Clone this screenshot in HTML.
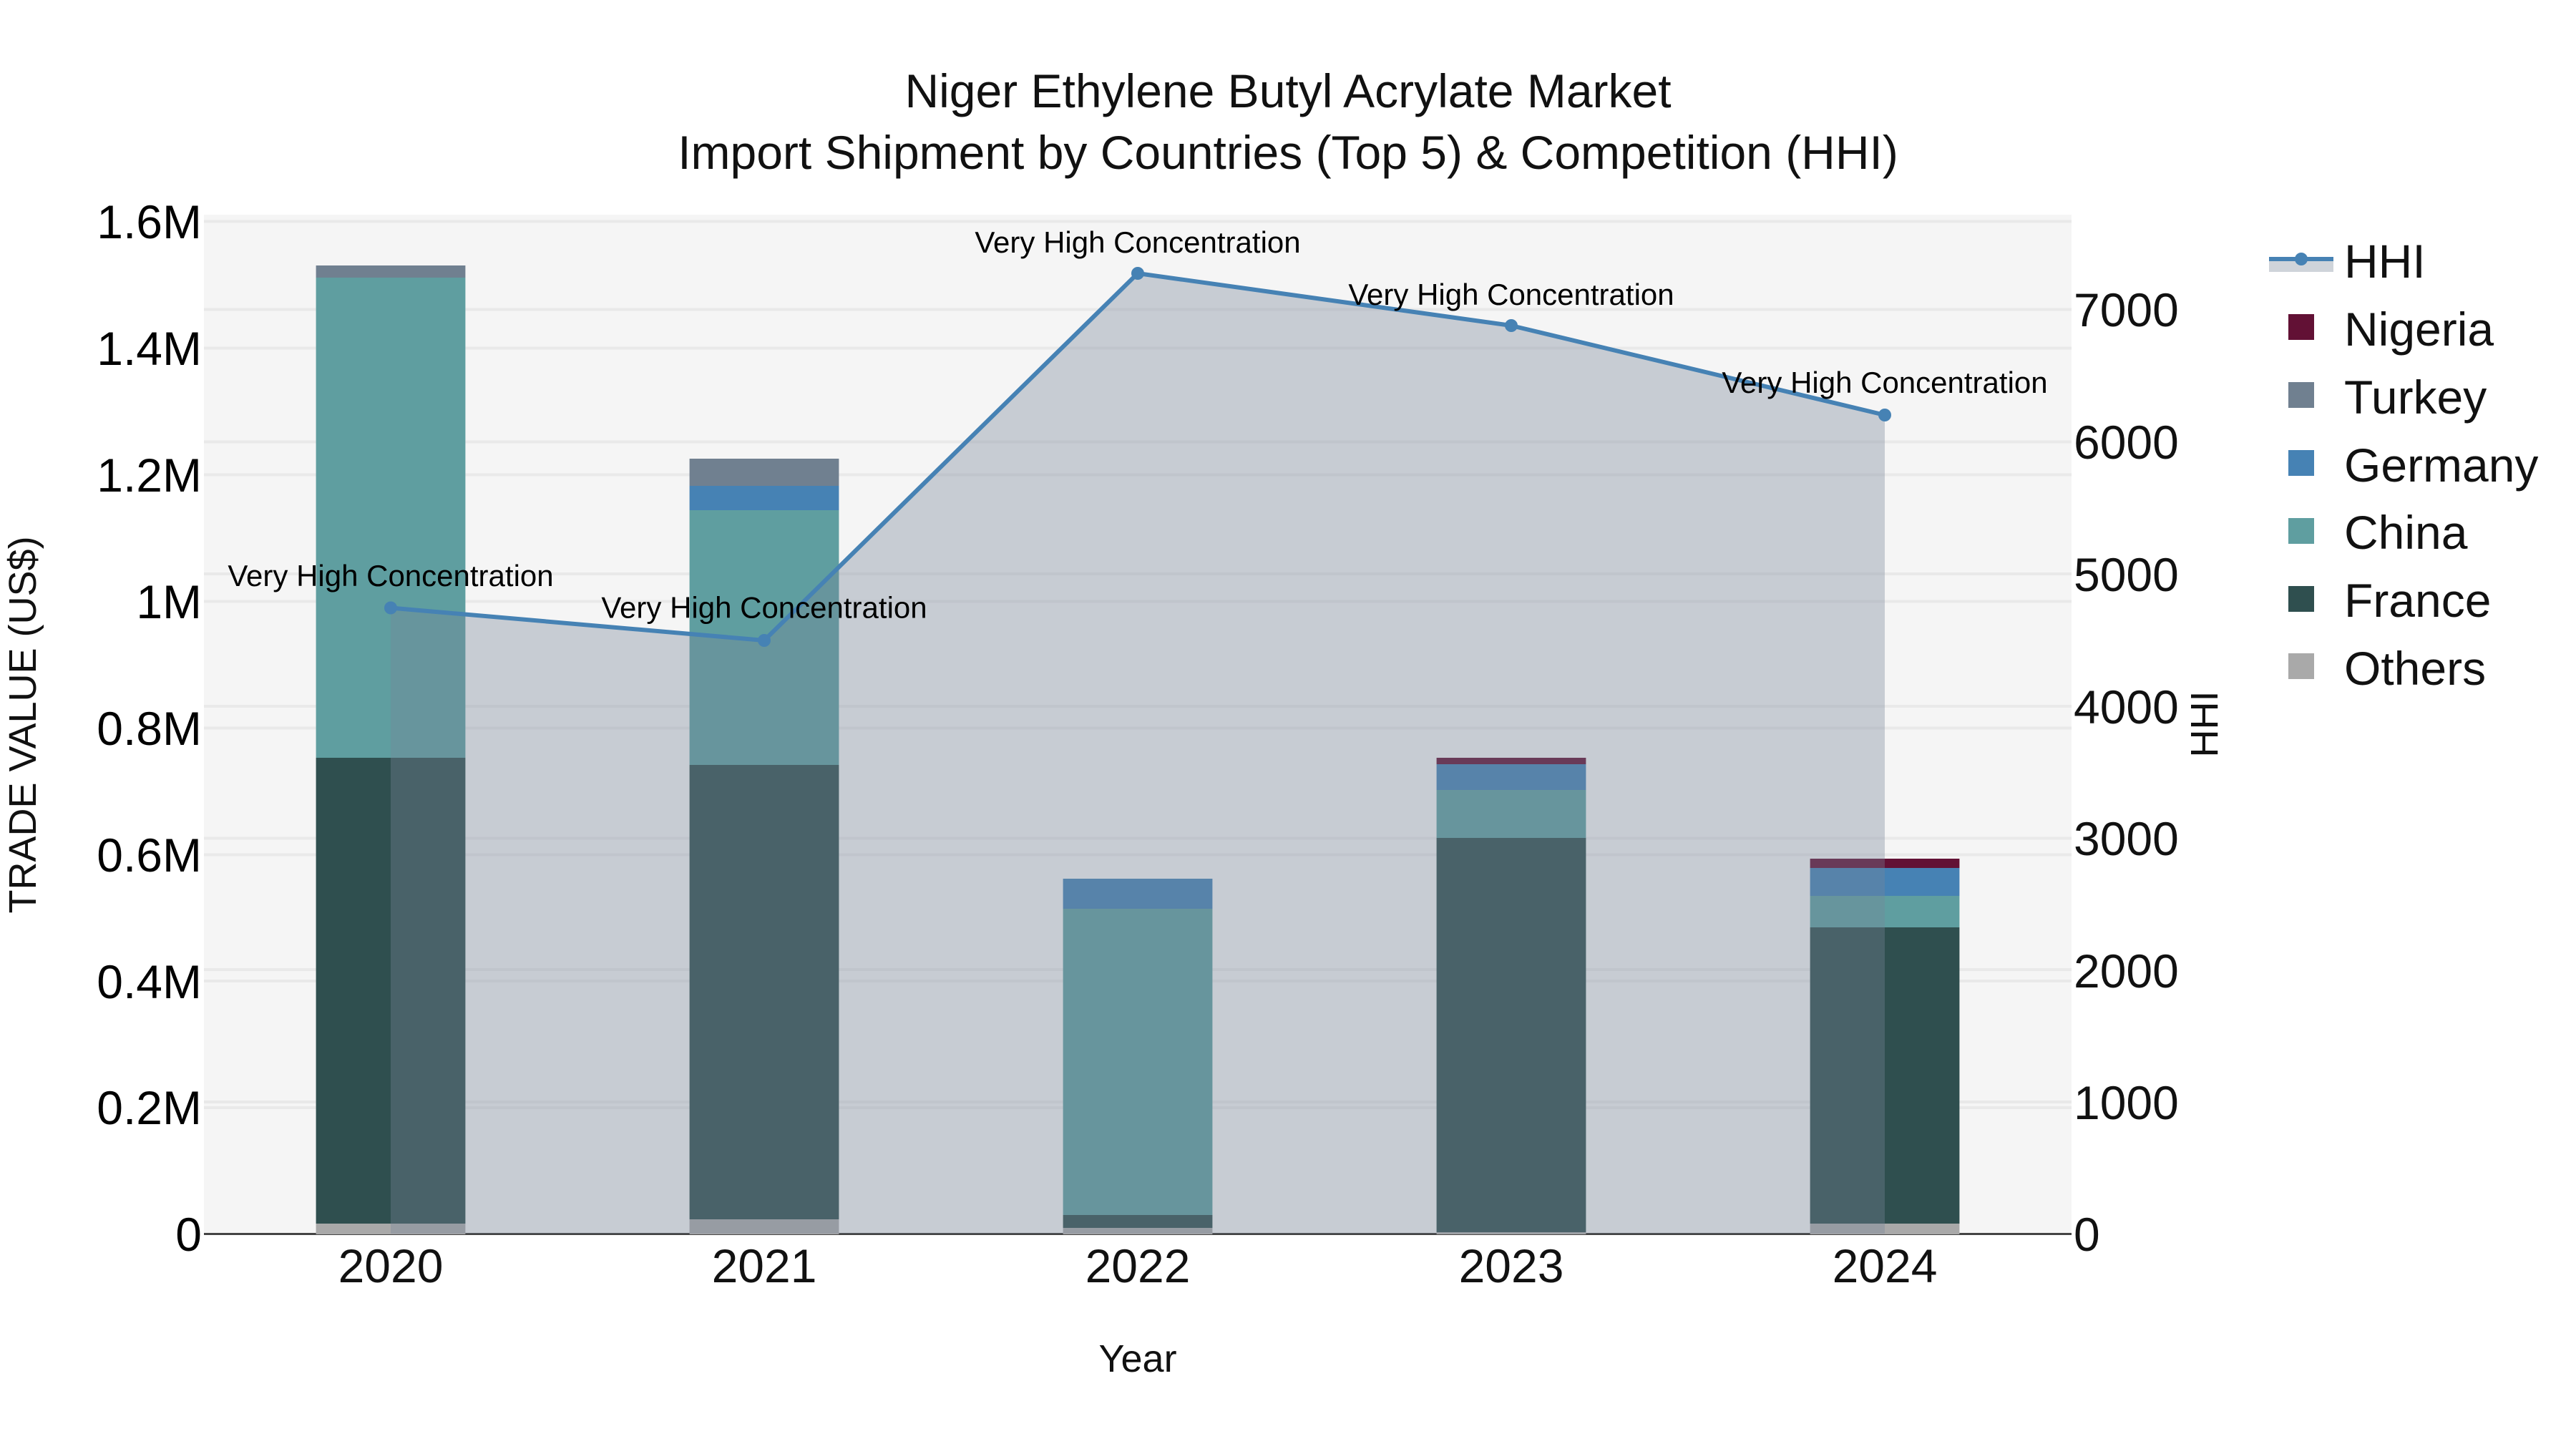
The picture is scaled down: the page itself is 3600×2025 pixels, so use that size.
<!DOCTYPE html>
<html><head><meta charset="utf-8"><style>
html,body{margin:0;padding:0;background:#fff;width:3600px;height:2025px;overflow:hidden}
svg{display:block}
text{font-family:"Liberation Sans",sans-serif;white-space:pre}
.t{font-size:66px;fill:#111}
.l{font-size:66px;fill:#000}
.a{font-size:42px;fill:#000;text-anchor:middle}
.x{text-anchor:middle}
.s{font-size:54px;fill:#111}
</style></head><body>
<svg width="3600" height="2025" viewBox="0 0 3600 2025" xmlns="http://www.w3.org/2000/svg">
<rect width="3600" height="2025" fill="#fff"/>
<rect x="285" y="300" width="2610" height="1425" fill="#f5f5f5"/>
<g stroke="#e9e9e9" stroke-width="4">
<path d="M285 309.5H2895M285 486.5H2895M285 663.5H2895M285 840.5H2895M285 1017.5H2895M285 1194.5H2895M285 1371H2895M285 1548H2895"/>
<path d="M285 432.5H2895M285 617.5H2895M285 802H2895M285 987H2895M285 1171.5H2895M285 1355H2895M285 1540H2895"/>
</g>
<rect x="285" y="1723" width="2610" height="3" fill="#444"/>
<g>
<rect x="441.6" y="371" width="208.8" height="17" fill="#708090"/>
<rect x="441.6" y="388" width="208.8" height="671" fill="#5f9ea0"/>
<rect x="441.6" y="1059" width="208.8" height="651" fill="#2f4f4f"/>
<rect x="441.6" y="1710" width="208.8" height="15" fill="#a9a9a9"/>

<rect x="963.6" y="641" width="208.8" height="38" fill="#708090"/>
<rect x="963.6" y="679" width="208.8" height="34" fill="#4682b4"/>
<rect x="963.6" y="713" width="208.8" height="356" fill="#5f9ea0"/>
<rect x="963.6" y="1069" width="208.8" height="635" fill="#2f4f4f"/>
<rect x="963.6" y="1704" width="208.8" height="21" fill="#a9a9a9"/>

<rect x="1485.6" y="1228" width="208.8" height="42" fill="#4682b4"/>
<rect x="1485.6" y="1270" width="208.8" height="428" fill="#5f9ea0"/>
<rect x="1485.6" y="1698" width="208.8" height="18" fill="#2f4f4f"/>
<rect x="1485.6" y="1716" width="208.8" height="9" fill="#a9a9a9"/>

<rect x="2007.6" y="1059" width="208.8" height="9" fill="#621135"/>
<rect x="2007.6" y="1068" width="208.8" height="36" fill="#4682b4"/>
<rect x="2007.6" y="1104" width="208.8" height="67" fill="#5f9ea0"/>
<rect x="2007.6" y="1171" width="208.8" height="551" fill="#2f4f4f"/>
<rect x="2007.6" y="1722" width="208.8" height="3" fill="#a9a9a9"/>

<rect x="2529.6" y="1200" width="208.8" height="13" fill="#621135"/>
<rect x="2529.6" y="1213" width="208.8" height="39" fill="#4682b4"/>
<rect x="2529.6" y="1252" width="208.8" height="44" fill="#5f9ea0"/>
<rect x="2529.6" y="1296" width="208.8" height="414" fill="#2f4f4f"/>
<rect x="2529.6" y="1710" width="208.8" height="15" fill="#a9a9a9"/>
</g>
<polygon points="546,849.5 1068,895 1590,382 2112,455 2634,580 2634,1724 546,1724" fill="rgb(120,134,153)" fill-opacity="0.36"/>
<polyline points="546,849.5 1068,895 1590,382 2112,455 2634,580" fill="none" stroke="#4682b4" stroke-width="6" stroke-linejoin="round"/>
<g fill="#4682b4">
<circle cx="546" cy="849.5" r="9"/><circle cx="1068" cy="895" r="9"/><circle cx="1590" cy="382" r="9"/><circle cx="2112" cy="455" r="9"/><circle cx="2634" cy="580" r="9"/>
</g>
<text class="a" x="546" y="819">Very High Concentration</text>
<text class="a" x="1068" y="863.5">Very High Concentration</text>
<text class="a" x="1590" y="353">Very High Concentration</text>
<text class="a" x="2112" y="426">Very High Concentration</text>
<text class="a" x="2634" y="549">Very High Concentration</text>

<text class="t" x="1800" y="150" text-anchor="middle">Niger Ethylene Butyl Acrylate Market</text>
<text class="t" x="1800" y="236" text-anchor="middle">Import Shipment by Countries (Top 5) &amp; Competition (HHI)</text>

<g class="l" text-anchor="end">
<text x="282" y="333">1.6M</text>
<text x="282" y="510">1.4M</text>
<text x="282" y="687">1.2M</text>
<text x="282" y="864">1M</text>
<text x="282" y="1041">0.8M</text>
<text x="282" y="1218">0.6M</text>
<text x="282" y="1395">0.4M</text>
<text x="282" y="1571">0.2M</text>
<text x="282" y="1748">0</text>
</g>
<g class="t" text-anchor="start">
<text x="2898" y="456">7000</text>
<text x="2898" y="641">6000</text>
<text x="2898" y="826">5000</text>
<text x="2898" y="1011">4000</text>
<text x="2898" y="1195">3000</text>
<text x="2898" y="1380">2000</text>
<text x="2898" y="1564">1000</text>
<text x="2898" y="1748">0</text>
</g>
<g class="t x">
<text x="546" y="1792">2020</text>
<text x="1068" y="1792">2021</text>
<text x="1590" y="1792">2022</text>
<text x="2112" y="1792">2023</text>
<text x="2634" y="1792">2024</text>
</g>
<text class="s x" x="1590" y="1917">Year</text>
<text class="s x" transform="translate(50 1013) rotate(-90)">TRADE VALUE (US$)</text>
<text class="s x" transform="translate(3099 1012) rotate(-90)">HHI</text>

<rect x="3171" y="362" width="90" height="18" fill="#cfd4da"/>
<rect x="3171" y="359" width="90" height="6" fill="#4682b4"/>
<circle cx="3216" cy="362" r="9" fill="#4682b4"/>
<rect x="3198" y="439" width="36" height="36" fill="#621135"/>
<rect x="3198" y="534" width="36" height="36" fill="#708090"/>
<rect x="3198" y="629" width="36" height="36" fill="#4682b4"/>
<rect x="3198" y="724" width="36" height="36" fill="#5f9ea0"/>
<rect x="3198" y="819" width="36" height="36" fill="#2f4f4f"/>
<rect x="3198" y="913" width="36" height="36" fill="#a9a9a9"/>
<g class="t">
<text x="3276" y="388">HHI</text>
<text x="3276" y="483">Nigeria</text>
<text x="3276" y="578">Turkey</text>
<text x="3276" y="673">Germany</text>
<text x="3276" y="767">China</text>
<text x="3276" y="862">France</text>
<text x="3276" y="957">Others</text>
</g>
</svg>
</body></html>
